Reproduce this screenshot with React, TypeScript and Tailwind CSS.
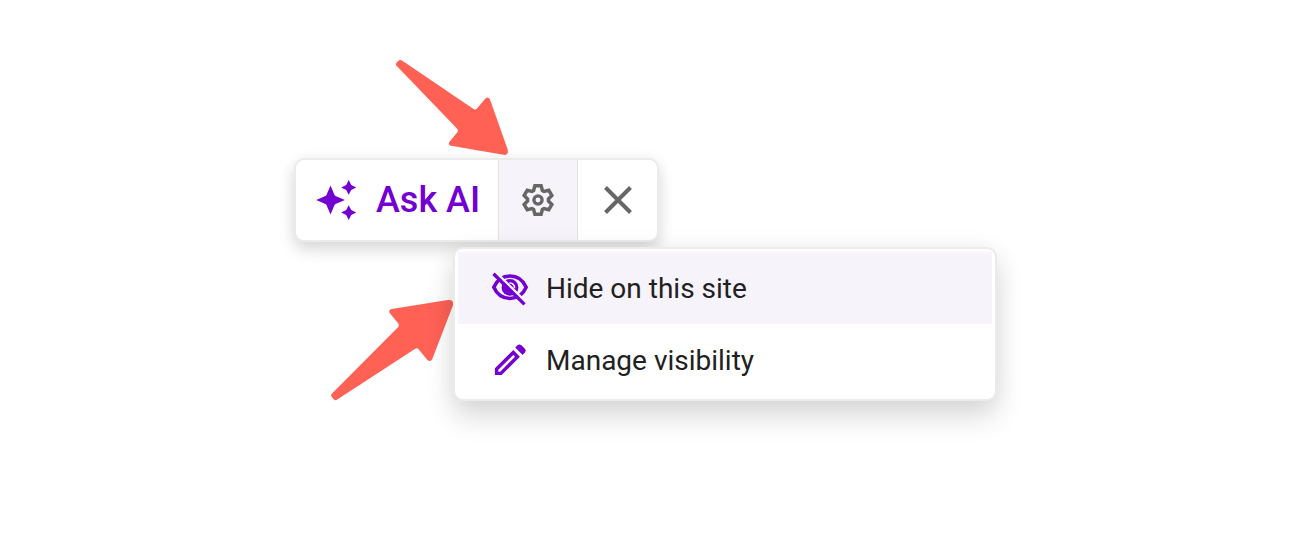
import React from "react";

function SparkleIcon() {
  return (
    <svg className="h-10 w-10 shrink-0 overflow-visible" viewBox="0 0 40 40" fill="#7300d1">
      <path d="M14.5 5.6 L18.5 15 Q18.8 15.7 19.5 16 L28.9 20 L19.5 24 Q18.8 24.3 18.5 25 L14.5 34.4 L10.5 25 Q10.2 24.3 9.5 24 L0.2 20 L9.5 16 Q10.2 15.7 10.5 15 Z" />
      <path d="M32.7 -0.1 L35.2 4.9 L40.2 7.4 L35.2 9.9 L32.7 14.8 L30.2 9.9 L25.2 7.4 L30.2 4.9 Z" />
      <path d="M32.7 25.2 L35.2 30.1 L40.2 32.6 L35.2 35.1 L32.7 40.1 L30.2 35.1 L25.2 32.6 L30.2 30.1 Z" />
    </svg>
  );
}

function GearIcon() {
  const tooth = [
    [-4.4, -9.5],
    [-3.1, -14.2],
    [3.1, -14.2],
    [4.4, -9.5],
  ];
  const points = [0, 60, 120, 180, 240, 300]
    .flatMap((deg) => {
      const a = (deg * Math.PI) / 180;
      return tooth.map(
        ([x, y]) =>
          `${(x * Math.cos(a) - y * Math.sin(a)).toFixed(2)},${(x * Math.sin(a) + y * Math.cos(a)).toFixed(2)}`,
      );
    })
    .join(" ");
  return (
    <svg className="h-9 w-9" viewBox="-18 -18 36 36" fill="none" stroke="#666" strokeWidth="3.5">
      <polygon points={points} />
      <circle r="4.1" strokeWidth="3.3" />
    </svg>
  );
}

function CloseIcon() {
  return (
    <svg className="h-8 w-8" viewBox="0 0 32 32" stroke="#666" strokeWidth="4">
      <path d="M3.5 3.5 L28.5 28.5 M28.5 3.5 L3.5 28.5" />
    </svg>
  );
}

function HideIcon() {
  return (
    <svg className="h-10 w-10 shrink-0" viewBox="0 0 40 40" fill="none" stroke="#7300d1" strokeWidth="3.5">
      <path d="M3.8 19.2 C7 12 13 8 20 8 S33 12 36.2 19.2 C33 26.4 27 30.4 20 30.4 S7 26.4 3.8 19.2 Z" />
      <circle cx="20" cy="19.4" r="8.4" fill="#7300d1" stroke="none" />
      <path d="M19.4 15 A4.5 4.5 0 0 1 24.4 20.2" stroke="#f6f3fb" strokeWidth="1.6" />
      <path d="M6.3 4.8 L38 36.1" stroke="#f6f3fb" strokeWidth="2.6" />
      <path d="M3.5 5.8 L34.5 36.4" strokeWidth="3.4" />
    </svg>
  );
}

function PencilIcon() {
  return (
    <svg className="h-10 w-10 shrink-0" viewBox="0 0 40 40" fill="none" stroke="#7300d1" strokeWidth="3.4">
      <path d="M6.6 33.4 V29 L23.3 12.5 L27.5 16.7 L10.9 33.4 Z" />
      <path
        d="M25.2 7.5 L27.4 5.3 Q29.4 3.5 31.4 5.3 L34.9 8.8 Q36.7 10.7 34.9 12.6 L32.6 14.9 Z"
        fill="#7300d1"
        stroke="none"
      />
    </svg>
  );
}

function Arrows() {
  return (
    <svg className="pointer-events-none absolute inset-0 h-full w-full" viewBox="0 0 1312 536" fill="#ff6155">
      <path d="M396.3 65.5 Q395.2 64 396.5 62.7 L398.4 60.7 Q400 59.3 402 60.5 L473.5 109.1 Q475.4 110.2 477 108.6 L485.2 98.7 Q488.4 96.2 490 99.5 L507.7 149.5 Q509 155.6 503.4 154.8 L451 145.8 Q447.8 144.6 449.5 141.7 L457.4 132.2 Q458.8 130.3 457.2 128.7 Z" />
      <path d="M331.6 396.7 Q330.3 395.1 331.8 393.7 L398 327.3 Q399.7 325.6 398.3 323.6 L389.7 313 Q388.1 309.8 391.7 308.9 L447.8 300 Q454 299.3 453 305.3 L432.2 359.3 Q430.4 362.5 427.4 360 L418.8 349.5 Q417.2 347.6 415.2 348.8 L336.9 399.7 Q335 400.8 333.7 399.3 Z" />
    </svg>
  );
}

function MenuItem({ icon, label, active }: { icon: React.ReactNode; label: string; active?: boolean }) {
  return (
    <button
      className={`flex h-[72px] w-full items-center gap-4 pl-8 text-left text-[28px] leading-none text-[#212121] ${
        active ? "bg-[#f6f3fb]" : "bg-white"
      }`}
    >
      {icon}
      <span className="pt-0.5">{label}</span>
    </button>
  );
}

export default function App() {
  return (
    <main className="relative flex h-[536px] w-[1312px] flex-col items-start overflow-hidden bg-white pl-[294px] pt-[158px] font-['Roboto',sans-serif]">
      <div className="flex h-[84px] w-[365px] shrink-0 overflow-hidden rounded-[10px] border-2 border-[#ebebeb] bg-white shadow-[0_8px_16px_rgba(0,0,0,0.14),0_0_16px_rgba(0,0,0,0.04)]">
        <button className="flex w-[202px] shrink-0 items-center gap-5 pl-5 text-[36px] font-medium leading-none text-[#7300d1]">
          <SparkleIcon />
          <span className="whitespace-nowrap">Ask AI</span>
        </button>
        <button className="flex w-20 shrink-0 items-center justify-center border-x border-[#e2e1e6] bg-[#f6f3fb]">
          <GearIcon />
        </button>
        <button className="flex flex-1 items-center justify-center">
          <CloseIcon />
        </button>
      </div>
      <Arrows />
      <div className="relative ml-[159px] mt-[5px] h-[154px] w-[544px] shrink-0 rounded-[10px] border-2 border-[#ebebeb] bg-white p-[3px] shadow-[0_16px_28px_rgba(0,0,0,0.14),0_0_24px_rgba(0,0,0,0.05)]">
        <MenuItem icon={<HideIcon />} label="Hide on this site" active />
        <MenuItem icon={<PencilIcon />} label="Manage visibility" />
      </div>
    </main>
  );
}
